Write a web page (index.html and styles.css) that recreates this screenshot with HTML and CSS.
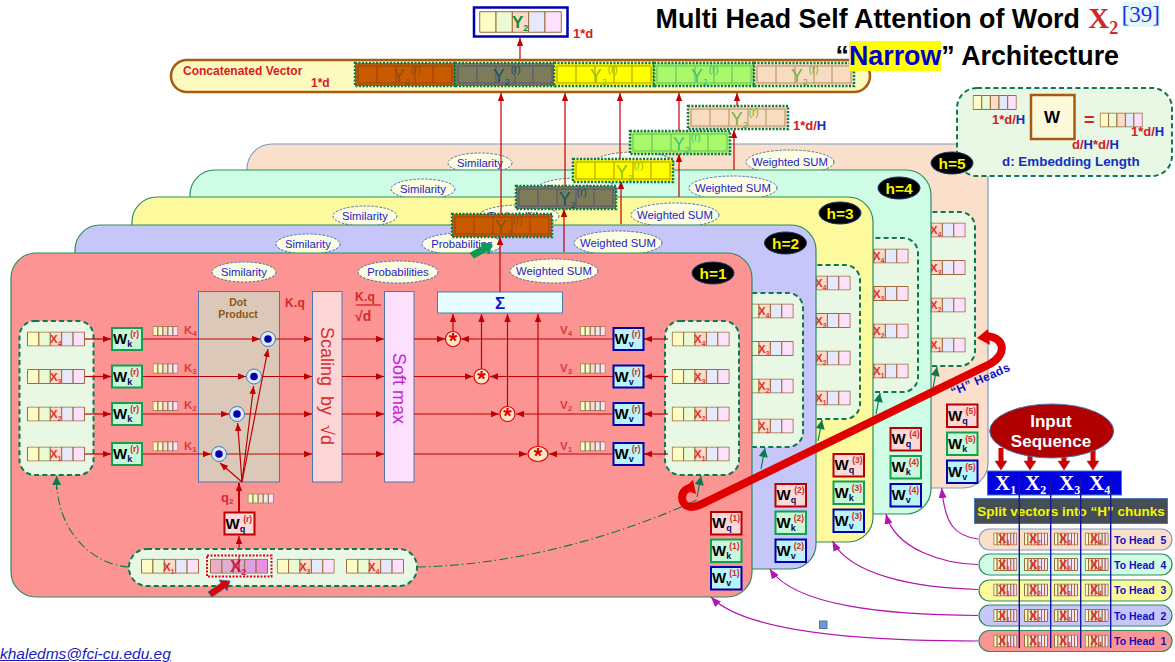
FILE: index.html
```html
<!DOCTYPE html>
<html lang="en">
<head>
<meta charset="utf-8">
<title>Multi Head Self Attention</title>
<link rel="stylesheet" href="styles.css">
</head>
<body>
<main class="slide">
<svg class="diagram" width="1175" height="662" viewBox="0 0 1175 662">
<defs>
  <marker id="ar" viewBox="0 0 10 8" refX="10" refY="4" markerUnits="userSpaceOnUse" markerWidth="8" markerHeight="7" orient="auto"><path class="m-red" d="M0 0L10 4L0 8z"/></marker>
  <marker id="ag" viewBox="0 0 10 10" refX="10" refY="5" markerUnits="userSpaceOnUse" markerWidth="11" markerHeight="9" orient="auto"><path class="m-green" d="M0 0L10 5L0 10z"/></marker>
  <marker id="ap" viewBox="0 0 10 8" refX="10" refY="4" markerUnits="userSpaceOnUse" markerWidth="10" markerHeight="8" orient="auto"><path class="m-purple" d="M0 0L10 4L0 8z"/></marker>
  <symbol id="vec" viewBox="0 0 58 15" preserveAspectRatio="none">
    <rect class="c c1" x="0.5" y="0.5" width="11.4" height="14"/><rect class="c c2" x="11.9" y="0.5" width="11.4" height="14"/><rect class="c c3" x="23.3" y="0.5" width="11.4" height="14"/><rect class="c c4" x="34.7" y="0.5" width="11.4" height="14"/><rect class="c c5" x="46.1" y="0.5" width="11.4" height="14"/>
  </symbol>
  <symbol id="vecp" viewBox="0 0 58 15" preserveAspectRatio="none">
    <rect class="c p1" x="0.5" y="0.5" width="11.4" height="14"/><rect class="c p2" x="11.9" y="0.5" width="11.4" height="14"/><rect class="c p3" x="23.3" y="0.5" width="11.4" height="14"/><rect class="c p4" x="34.7" y="0.5" width="11.4" height="14"/><rect class="c p5" x="46.1" y="0.5" width="11.4" height="14"/>
  </symbol>
  <symbol id="mini" viewBox="0 0 24 13" preserveAspectRatio="none">
    <rect class="c c1" x="0.5" y="0.5" width="3.4" height="12"/><rect class="c c2" x="3.9" y="0.5" width="3.4" height="12"/><rect class="c c3" x="7.3" y="0.5" width="3.4" height="12"/><rect class="c c3" x="10.7" y="0.5" width="3.4" height="12"/><rect class="c c4" x="14.1" y="0.5" width="3.4" height="12"/><rect class="c c5" x="17.5" y="0.5" width="3" height="12"/><rect class="c c5" x="20.5" y="0.5" width="3" height="12"/>
  </symbol>
  <g id="yvec">
    <rect class="yo" x="0" y="0" width="100" height="23"/>
    <rect class="yi" x="3" y="3" width="94" height="17"/>
    <path class="yd" d="M22 3V20M41 3V20M60 3V20M78 3V20"/>
  </g>
  <g id="valgroup">
    <rect class="grp" x="665" y="321" width="74" height="154" rx="15"/>
    <use href="#vec" x="671.7" y="331.5" width="58" height="15"/><text class="xl" x="694" y="343">X<tspan class="xs" dy="3">4</tspan></text>
    <use href="#vec" x="671.7" y="369" width="58" height="15"/><text class="xl" x="694" y="380.5">X<tspan class="xs" dy="3">3</tspan></text>
    <use href="#vec" x="671.7" y="406.5" width="58" height="15"/><text class="xl" x="694" y="418">X<tspan class="xs" dy="3">2</tspan></text>
    <use href="#vec" x="671.7" y="446.5" width="58" height="15"/><text class="xl" x="694" y="458">X<tspan class="xs" dy="3">1</tspan></text>
    <line class="lg" x1="697" y1="497" x2="701" y2="476" marker-end="url(#ag)"/>
  </g>
</defs>

<!-- head 5 -->
<rect class="panel p-5" x="247" y="144" width="741" height="344" rx="25"/>
<ellipse class="tag" cx="480" cy="163" rx="32" ry="10"/><text class="tagt" x="480" y="167">Similarity</text>
<ellipse class="tag" cx="634" cy="163" rx="40" ry="11"/><text class="tagt" x="634" y="167">Probabilities</text>
<ellipse class="tag" cx="790" cy="162" rx="44" ry="12"/><text class="tagt" x="790" y="166">Weighted SUM</text>
<use href="#valgroup" transform="translate(236 -109)"/>
<!-- head 4 -->
<rect class="panel p-4" x="190" y="170" width="741" height="344" rx="25"/>
<ellipse class="tag" cx="423" cy="189" rx="32" ry="10"/><text class="tagt" x="423" y="193">Similarity</text>
<ellipse class="tag" cx="577" cy="189" rx="40" ry="11"/><text class="tagt" x="577" y="193">Probabilities</text>
<ellipse class="tag" cx="733" cy="188" rx="44" ry="12"/><text class="tagt" x="733" y="192">Weighted SUM</text>
<use href="#valgroup" transform="translate(179 -83)"/>
<!-- head 3 -->
<rect class="panel p-3" x="132" y="197" width="741" height="345" rx="25"/>
<ellipse class="tag" cx="365" cy="216" rx="32" ry="10"/><text class="tagt" x="365" y="220">Similarity</text>
<ellipse class="tag" cx="519" cy="216" rx="40" ry="11"/><text class="tagt" x="519" y="220">Probabilities</text>
<ellipse class="tag" cx="675" cy="215" rx="44" ry="12"/><text class="tagt" x="675" y="219">Weighted SUM</text>
<use href="#valgroup" transform="translate(121 -56)"/>
<!-- head 2 -->
<rect class="panel p-2" x="75" y="225" width="741" height="344" rx="25"/>
<ellipse class="tag" cx="308" cy="244" rx="32" ry="10"/><text class="tagt" x="308" y="248">Similarity</text>
<ellipse class="tag" cx="462" cy="244" rx="40" ry="11"/><text class="tagt" x="462" y="248">Probabilities</text>
<ellipse class="tag" cx="618" cy="243" rx="44" ry="12"/><text class="tagt" x="618" y="247">Weighted SUM</text>
<use href="#valgroup" transform="translate(64 -28)"/>
<!-- head 1 -->
<rect class="panel p-1" x="11" y="253" width="741" height="344" rx="25"/>
<ellipse class="tag" cx="244" cy="272" rx="32" ry="10"/><text class="tagt" x="244" y="276">Similarity</text>
<ellipse class="tag" cx="398" cy="272" rx="40" ry="11"/><text class="tagt" x="398" y="276">Probabilities</text>
<ellipse class="tag" cx="554" cy="271" rx="44" ry="12"/><text class="tagt" x="554" y="275">Weighted SUM</text>

<!-- left key group -->
<rect class="grp" x="19.5" y="321" width="74" height="154" rx="15"/>
<use href="#vec" x="27" y="331.5" width="58" height="15"/><text class="xl" x="50" y="343">X<tspan class="xs" dy="3">4</tspan></text>
<use href="#vec" x="27" y="369" width="58" height="15"/><text class="xl" x="50" y="380.5">X<tspan class="xs" dy="3">3</tspan></text>
<use href="#vec" x="27" y="406.5" width="58" height="15"/><text class="xl" x="50" y="418">X<tspan class="xs" dy="3">2</tspan></text>
<use href="#vec" x="27" y="446.5" width="58" height="15"/><text class="xl" x="50" y="458">X<tspan class="xs" dy="3">1</tspan></text>
<use href="#valgroup"/>

<!-- blocks -->
<rect class="box dot" x="198.5" y="291.5" width="81" height="190.5"/>
<text class="dott" x="238" y="306">Dot</text><text class="dott" x="238" y="318">Product</text>
<text class="kq" x="285" y="307">K.q</text>
<rect class="box scale" x="312.5" y="291.5" width="29.5" height="190.5"/>
<text class="vert vs" transform="translate(321 327) rotate(90)">Scaling  by  √d</text>
<rect class="box soft" x="384.5" y="291.5" width="29.5" height="190.5"/>
<text class="vert vm" transform="translate(393 353) rotate(90)">Soft max</text>
<text class="kq" x="355" y="301">K.q</text><line class="frac" x1="356" y1="305" x2="381" y2="305"/><text class="kq2" x="355" y="321">√d</text>
<rect class="box sum" x="437.5" y="292" width="125" height="21"/>
<text class="sigma" x="500" y="309">Σ</text>

<!-- row arrows -->
<g class="lr">
  <line x1="85" y1="339" x2="111" y2="339" marker-end="url(#ar)"/><line x1="85" y1="376.5" x2="111" y2="376.5" marker-end="url(#ar)"/><line x1="85" y1="414" x2="111" y2="414" marker-end="url(#ar)"/><line x1="85" y1="454" x2="111" y2="454" marker-end="url(#ar)"/>
  <line x1="142" y1="339" x2="260" y2="339" marker-end="url(#ar)"/><line x1="142" y1="376.5" x2="246" y2="376.5" marker-end="url(#ar)"/><line x1="142" y1="414" x2="229" y2="414" marker-end="url(#ar)"/><line x1="142" y1="454" x2="211" y2="454" marker-end="url(#ar)"/>
  <line x1="276" y1="339" x2="312" y2="339" marker-end="url(#ar)"/><line x1="262" y1="376.5" x2="312" y2="376.5" marker-end="url(#ar)"/><line x1="245" y1="414" x2="312" y2="414" marker-end="url(#ar)"/><line x1="227" y1="454" x2="312" y2="454" marker-end="url(#ar)"/>
  <line x1="342" y1="339" x2="384" y2="339" marker-end="url(#ar)"/><line x1="342" y1="376.5" x2="384" y2="376.5" marker-end="url(#ar)"/><line x1="342" y1="414" x2="384" y2="414" marker-end="url(#ar)"/><line x1="342" y1="454" x2="384" y2="454" marker-end="url(#ar)"/>
  <line x1="414" y1="339" x2="445" y2="339" marker-end="url(#ar)"/><line x1="414" y1="376.5" x2="473" y2="376.5" marker-end="url(#ar)"/><line x1="414" y1="414" x2="499" y2="414" marker-end="url(#ar)"/><line x1="414" y1="454" x2="527" y2="454" marker-end="url(#ar)"/>
  <line x1="613" y1="339" x2="461" y2="339" marker-end="url(#ar)"/><line x1="613" y1="376.5" x2="490" y2="376.5" marker-end="url(#ar)"/><line x1="613" y1="414" x2="516" y2="414" marker-end="url(#ar)"/><line x1="613" y1="454" x2="549" y2="454" marker-end="url(#ar)"/>
  <line x1="668" y1="339" x2="644" y2="339" marker-end="url(#ar)"/><line x1="668" y1="376.5" x2="644" y2="376.5" marker-end="url(#ar)"/><line x1="668" y1="414" x2="644" y2="414" marker-end="url(#ar)"/><line x1="668" y1="454" x2="644" y2="454" marker-end="url(#ar)"/>
  <line x1="453" y1="331" x2="453" y2="314" marker-end="url(#ar)"/><line x1="481.5" y1="369" x2="481.5" y2="314" marker-end="url(#ar)"/><line x1="507.5" y1="406" x2="507.5" y2="314" marker-end="url(#ar)"/><line x1="538" y1="446" x2="538" y2="314" marker-end="url(#ar)"/>
  <line x1="242" y1="482" x2="220" y2="463" marker-end="url(#ar)"/><line x1="242" y1="482" x2="237.6" y2="423" marker-end="url(#ar)"/><line x1="242" y1="482" x2="253.6" y2="386" marker-end="url(#ar)"/><line x1="242" y1="482" x2="268" y2="349" marker-end="url(#ar)"/>
  <line class="thick" x1="239" y1="512" x2="239" y2="483" marker-end="url(#ar)"/>
  <line x1="239" y1="556" x2="239" y2="536" marker-end="url(#ar)"/>
</g>
<g class="dotm"><circle cx="268" cy="339" r="7.5"/><circle cx="254" cy="376.5" r="7.5"/><circle cx="237" cy="414" r="7.5"/><circle cx="219" cy="454" r="7.5"/></g>
<g class="doti"><circle cx="268" cy="339" r="3.8"/><circle cx="254" cy="376.5" r="3.8"/><circle cx="237" cy="414" r="3.8"/><circle cx="219" cy="454" r="3.8"/></g>
<g class="star"><circle cx="453" cy="339" r="7.5"/><circle cx="481.5" cy="376.5" r="7.5"/><circle cx="507.5" cy="414" r="7.5"/><ellipse cx="538" cy="454" rx="10" ry="7.5"/></g>
<text class="start" x="453" y="348">*</text><text class="start" x="481.5" y="385.5">*</text><text class="start" x="507.5" y="423">*</text><text class="start" x="538" y="463">*</text>

<!-- small key and value vectors -->
<use href="#vec" x="152.7" y="326" width="25.5" height="10"/><use href="#vec" x="152.7" y="363.5" width="25.5" height="10"/><use href="#vec" x="152.7" y="401" width="25.5" height="10"/><use href="#vec" x="152.7" y="441.3" width="25.5" height="10"/>
<use href="#vec" x="580" y="326" width="25.5" height="10"/><use href="#vec" x="580" y="363.5" width="25.5" height="10"/><use href="#vec" x="580" y="401" width="25.5" height="10"/><use href="#vec" x="580" y="441.3" width="25.5" height="10"/>
<text class="kv" x="184" y="334">K<tspan class="kvs" dy="2">4</tspan></text><text class="kv" x="184" y="372">K<tspan class="kvs" dy="2">3</tspan></text><text class="kv" x="184" y="409">K<tspan class="kvs" dy="2">2</tspan></text><text class="kv" x="184" y="450">K<tspan class="kvs" dy="2">1</tspan></text>
<text class="kv" x="560" y="334">V<tspan class="kvs" dy="2">4</tspan></text><text class="kv" x="560" y="372">V<tspan class="kvs" dy="2">3</tspan></text><text class="kv" x="560" y="409">V<tspan class="kvs" dy="2">2</tspan></text><text class="kv" x="560" y="450">V<tspan class="kvs" dy="2">1</tspan></text>

<!-- W boxes head 1 -->
<g class="w k" transform="translate(112 328)"><rect width="30" height="22"/><text x="1" y="16">W<tspan class="sb" dy="3">k</tspan><tspan class="sp" dx="-2" dy="-10">(r)</tspan></text></g>
<g class="w k" transform="translate(112 365.5)"><rect width="30" height="22"/><text x="1" y="16">W<tspan class="sb" dy="3">k</tspan><tspan class="sp" dx="-2" dy="-10">(r)</tspan></text></g>
<g class="w k" transform="translate(112 403)"><rect width="30" height="22"/><text x="1" y="16">W<tspan class="sb" dy="3">k</tspan><tspan class="sp" dx="-2" dy="-10">(r)</tspan></text></g>
<g class="w k" transform="translate(112 443)"><rect width="30" height="22"/><text x="1" y="16">W<tspan class="sb" dy="3">k</tspan><tspan class="sp" dx="-2" dy="-10">(r)</tspan></text></g>
<g class="w v" transform="translate(613.5 328)"><rect width="30" height="22"/><text x="1" y="16">W<tspan class="sb" dy="3">v</tspan><tspan class="sp" dx="-2" dy="-10">(r)</tspan></text></g>
<g class="w v" transform="translate(613.5 365.5)"><rect width="30" height="22"/><text x="1" y="16">W<tspan class="sb" dy="3">v</tspan><tspan class="sp" dx="-2" dy="-10">(r)</tspan></text></g>
<g class="w v" transform="translate(613.5 403)"><rect width="30" height="22"/><text x="1" y="16">W<tspan class="sb" dy="3">v</tspan><tspan class="sp" dx="-2" dy="-10">(r)</tspan></text></g>
<g class="w v" transform="translate(613.5 443)"><rect width="30" height="22"/><text x="1" y="16">W<tspan class="sb" dy="3">v</tspan><tspan class="sp" dx="-2" dy="-10">(r)</tspan></text></g>
<g class="w q" transform="translate(224.5 512.5)"><rect width="30" height="22"/><text x="1" y="16">W<tspan class="sb" dy="3">q</tspan><tspan class="sp" dx="-2" dy="-10">(r)</tspan></text></g>
<text class="q2" x="221" y="502">q<tspan class="q2s" dy="2">2</tspan></text>
<use href="#vec" x="247.7" y="493.5" width="26" height="10"/>

<!-- bottom input group -->
<path class="dd" d="M129 567C95 565 60 535 57 487"/>
<path class="dd" d="M417 567C520 565 620 535 697 500"/>
<line class="lg" x1="56.6" y1="490" x2="56.6" y2="476" marker-end="url(#ag)"/>
<rect class="grp" x="129" y="549" width="288" height="37" rx="18"/>
<use href="#vec" x="141" y="558.7" width="58" height="15"/><text class="xl" x="163" y="571">X<tspan class="xs" dy="3">1</tspan></text>
<use href="#vecp" x="210" y="558.7" width="58" height="15"/><rect class="sel" x="207" y="555.5" width="64.5" height="21"/><text class="xb" x="230" y="572">X<tspan class="xbs" dy="3">2</tspan></text>
<use href="#vec" x="276.7" y="558.7" width="58" height="15"/><text class="xl" x="299" y="571">X<tspan class="xs" dy="3">3</tspan></text>
<use href="#vec" x="346" y="558.7" width="58" height="15"/><text class="xl" x="368" y="571">X<tspan class="xs" dy="3">4</tspan></text>
<line class="lr1" x1="239" y1="556" x2="239" y2="572"/>
<path class="ptr" d="M208 592L221 583L219 580L230 581L227 591L225 588L212 597z"/>
<path class="ptrg" d="M470 253L483 246L481 243L492 244L489 254L487 251L474 258z"/>

<!-- W boxes other heads -->
<g class="w q" transform="translate(711 512)"><rect width="30.5" height="22.5"/><text x="1" y="16">W<tspan class="sb" dy="3">q</tspan><tspan class="sp" dx="-2" dy="-10">(1)</tspan></text></g>
<g class="w k" transform="translate(711 539.5)"><rect width="30.5" height="22.5"/><text x="1" y="16">W<tspan class="sb" dy="3">k</tspan><tspan class="sp" dx="-2" dy="-10">(1)</tspan></text></g>
<g class="w v" transform="translate(711 567)"><rect width="30.5" height="22.5"/><text x="1" y="16">W<tspan class="sb" dy="3">v</tspan><tspan class="sp" dx="-2" dy="-10">(1)</tspan></text></g>
<g class="w q" transform="translate(775.5 484)"><rect width="30.5" height="22.5"/><text x="1" y="16">W<tspan class="sb" dy="3">q</tspan><tspan class="sp" dx="-2" dy="-10">(2)</tspan></text></g>
<g class="w k" transform="translate(775.5 511.5)"><rect width="30.5" height="22.5"/><text x="1" y="16">W<tspan class="sb" dy="3">k</tspan><tspan class="sp" dx="-2" dy="-10">(2)</tspan></text></g>
<g class="w v" transform="translate(775.5 539.5)"><rect width="30.5" height="22.5"/><text x="1" y="16">W<tspan class="sb" dy="3">v</tspan><tspan class="sp" dx="-2" dy="-10">(2)</tspan></text></g>
<g class="w q" transform="translate(833.5 454)"><rect width="30.5" height="22.5"/><text x="1" y="16">W<tspan class="sb" dy="3">q</tspan><tspan class="sp" dx="-2" dy="-10">(3)</tspan></text></g>
<g class="w k" transform="translate(833.5 481.5)"><rect width="30.5" height="22.5"/><text x="1" y="16">W<tspan class="sb" dy="3">k</tspan><tspan class="sp" dx="-2" dy="-10">(3)</tspan></text></g>
<g class="w v" transform="translate(833.5 509.5)"><rect width="30.5" height="22.5"/><text x="1" y="16">W<tspan class="sb" dy="3">v</tspan><tspan class="sp" dx="-2" dy="-10">(3)</tspan></text></g>
<g class="w q" transform="translate(890.5 428)"><rect width="30.5" height="22.5"/><text x="1" y="16">W<tspan class="sb" dy="3">q</tspan><tspan class="sp" dx="-2" dy="-10">(4)</tspan></text></g>
<g class="w k" transform="translate(890.5 456)"><rect width="30.5" height="22.5"/><text x="1" y="16">W<tspan class="sb" dy="3">k</tspan><tspan class="sp" dx="-2" dy="-10">(4)</tspan></text></g>
<g class="w v" transform="translate(890.5 484)"><rect width="30.5" height="22.5"/><text x="1" y="16">W<tspan class="sb" dy="3">v</tspan><tspan class="sp" dx="-2" dy="-10">(4)</tspan></text></g>
<g class="w q" transform="translate(947 404.5)"><rect width="30.5" height="22.5"/><text x="1" y="16">W<tspan class="sb" dy="3">q</tspan><tspan class="sp" dx="-2" dy="-10">(5)</tspan></text></g>
<g class="w k" transform="translate(947 432.5)"><rect width="30.5" height="22.5"/><text x="1" y="16">W<tspan class="sb" dy="3">k</tspan><tspan class="sp" dx="-2" dy="-10">(5)</tspan></text></g>
<g class="w v" transform="translate(947 460.5)"><rect width="30.5" height="22.5"/><text x="1" y="16">W<tspan class="sb" dy="3">v</tspan><tspan class="sp" dx="-2" dy="-10">(5)</tspan></text></g>

<!-- key box -->
<rect class="grp key" x="957" y="88" width="215" height="88" rx="20"/>
<use href="#vec" x="972.7" y="95" width="44" height="15"/>
<text class="sz" x="992" y="124">1*d/<tspan class="szb">H</tspan></text>
<rect class="wbig" x="1031" y="95" width="43.5" height="44"/><text class="wbigt" x="1052" y="123">W</text>
<text class="eq" x="1084" y="126">=</text>
<use href="#vec" x="1099.7" y="112.5" width="43" height="15"/>
<text class="sz" x="1131" y="136">1*d/<tspan class="szb">H</tspan></text>
<text class="sz" x="1072" y="149">d/<tspan class="szb">H</tspan>*d/<tspan class="szb">H</tspan></text>
<text class="emb" x="1002" y="166">d: Embedding Length</text>

<!-- badges -->
<ellipse class="badge" cx="952" cy="163" rx="21" ry="11"/><text class="badget" x="952" y="169">h=5</text>
<ellipse class="badge" cx="899" cy="188" rx="21" ry="11"/><text class="badget" x="899" y="194">h=4</text>
<ellipse class="badge" cx="840" cy="213" rx="21" ry="11"/><text class="badget" x="840" y="219">h=3</text>
<ellipse class="badge" cx="785.5" cy="243" rx="21" ry="11"/><text class="badget" x="785.5" y="249">h=2</text>
<ellipse class="badge" cx="713" cy="273" rx="21" ry="11"/><text class="badget" x="713" y="279">h=1</text>

<!-- red loop arrow -->
<path class="loop" d="M692 488C679 488 679 506 691 507C696 507 700 505 708 501L990 364C1008 354 1005 336 984 336"/>
<path class="loopa" d="M693 480L696 494L683 489z"/>
<path class="loopa" d="M977 338L988 329L990 345z"/>
<text class="hh" transform="translate(953 396) rotate(-24)">“H” Heads</text>

<!-- Y outputs -->
<g class="lr">
  <line x1="501" y1="214" x2="501" y2="93" marker-end="url(#ar)"/>
  <line x1="565" y1="186" x2="565" y2="93" marker-end="url(#ar)"/>
  <line x1="620" y1="159" x2="620" y2="93" marker-end="url(#ar)"/>
  <line x1="679" y1="132" x2="679" y2="93" marker-end="url(#ar)"/>
  <line x1="737" y1="107" x2="737" y2="93" marker-end="url(#ar)"/>
  <line x1="500" y1="292" x2="500" y2="237" marker-end="url(#ar)"/>
  <line x1="564" y1="252" x2="564" y2="209" marker-end="url(#ar)"/>
  <line x1="621" y1="224" x2="621" y2="181" marker-end="url(#ar)"/>
  <line x1="679" y1="197" x2="679" y2="154" marker-end="url(#ar)"/>
  <line x1="734" y1="170" x2="734" y2="130" marker-end="url(#ar)"/>
  <line x1="520" y1="59" x2="520" y2="38" marker-end="url(#ar)"/>
</g>
<use class="y y1" href="#yvec" x="452" y="214"/><text class="yl yc1" x="495" y="233">Y<tspan class="ys" dy="3">2</tspan><tspan class="yr" dx="1" dy="-12">(r)</tspan></text>
<use class="y y2" href="#yvec" x="516" y="186"/><text class="yl yc2" x="559" y="205">Y<tspan class="ys" dy="3">2</tspan><tspan class="yr" dx="1" dy="-12">(r)</tspan></text>
<use class="y y3" href="#yvec" x="573" y="159"/><text class="yl yc3" x="616" y="178">Y<tspan class="ys" dy="3">2</tspan><tspan class="yr" dx="1" dy="-12">(r)</tspan></text>
<use class="y y4" href="#yvec" x="630" y="131"/><text class="yl yc4" x="673" y="150">Y<tspan class="ys" dy="3">2</tspan><tspan class="yr" dx="1" dy="-12">(r)</tspan></text>
<use class="y y5" href="#yvec" x="688" y="106"/><text class="yl yc5" x="731" y="125">Y<tspan class="ys" dy="3">2</tspan><tspan class="yr" dx="1" dy="-12">(r)</tspan></text>
<text class="sz" x="793" y="130">1*d/<tspan class="szb">H</tspan></text>

<!-- concatenated -->
<rect class="concat" x="171" y="60" width="699" height="32" rx="16"/>
<text class="cont" x="183" y="75">Concatenated Vector</text><text class="cont" x="311" y="87">1*d</text>
<use class="y y1" href="#yvec" x="355" y="63"/><text class="yl yc1" x="393" y="82">Y<tspan class="ys" dy="3">2</tspan><tspan class="yr" dx="1" dy="-12">(r)</tspan></text>
<use class="y y2" href="#yvec" x="455" y="63"/><text class="yl yc2" x="493" y="82">Y<tspan class="ys" dy="3">2</tspan><tspan class="yr" dx="1" dy="-12">(r)</tspan></text>
<use class="y y3" href="#yvec" x="554" y="63"/><text class="yl yc3" x="590" y="82">Y<tspan class="ys" dy="3">2</tspan><tspan class="yr" dx="1" dy="-12">(r)</tspan></text>
<use class="y y4" href="#yvec" x="654" y="63"/><text class="yl yc4" x="691" y="82">Y<tspan class="ys" dy="3">2</tspan><tspan class="yr" dx="1" dy="-12">(r)</tspan></text>
<use class="y y5" href="#yvec" x="754" y="63"/><text class="yl yc5" x="791" y="82">Y<tspan class="ys" dy="3">2</tspan><tspan class="yr" dx="1" dy="-12">(r)</tspan></text>

<!-- final output -->
<rect class="out" x="474" y="7.5" width="93.5" height="29"/>
<use href="#vec" x="479" y="11" width="83" height="22"/>
<text class="yfin" x="512" y="28">Y<tspan class="yfs" dy="3">2</tspan></text>
<text class="sz" x="573" y="38">1*d</text>

<!-- input sequence -->
<g class="fat">
  <line x1="1001" y1="448" x2="1001" y2="462"/><line x1="1030" y1="452" x2="1030" y2="462"/><line x1="1064" y1="452" x2="1064" y2="462"/><line x1="1093" y1="448" x2="1093" y2="462"/>
</g>
<path class="fath" d="M995 461H1007L1001 470zM1024 461H1036L1030 470zM1058 461H1070L1064 470zM1087 461H1099L1093 470z"/>
<ellipse class="inseq" cx="1051.7" cy="431" rx="62" ry="27"/>
<text class="inseqt" x="1051" y="427">Input</text><text class="inseqt" x="1051" y="447">Sequence</text>
<rect class="xbar" x="987.5" y="471" width="134" height="24"/>
<text class="xw" x="995" y="490">X<tspan class="xws" dy="4">1</tspan></text><text class="xw" x="1025" y="490">X<tspan class="xws" dy="4">2</tspan></text><text class="xw" x="1059" y="490">X<tspan class="xws" dy="4">3</tspan></text><text class="xw" x="1089" y="490">X<tspan class="xws" dy="4">4</tspan></text>
<rect class="split" x="974.5" y="498.5" width="193" height="25"/>
<text class="splitt" x="1071" y="516">Split vectors into “H” chunks</text>

<!-- head rows -->
<rect class="pill p-5" x="979" y="529" width="193" height="21" rx="10.5"/>
<rect class="pill pg p-4" x="979" y="554" width="193" height="21" rx="10.5"/>
<rect class="pill pg p-3" x="979" y="580" width="193" height="21" rx="10.5"/>
<rect class="pill pg p-2" x="979" y="605" width="193" height="21" rx="10.5"/>
<rect class="pill pg p-1" x="979" y="630.5" width="193" height="21" rx="10.5"/>

<use href="#mini" x="993.3" y="532.5" width="24" height="13"/><use href="#mini" x="1024" y="532.5" width="24" height="13"/><use href="#mini" x="1054" y="532.5" width="24" height="13"/><use href="#mini" x="1084.7" y="532.5" width="24" height="13"/>
<text class="xm" x="998" y="543">X<tspan class="xs" dy="2">1</tspan></text><text class="xm" x="1029" y="543">X<tspan class="xs" dy="2">2</tspan></text><text class="xm" x="1059" y="543">X<tspan class="xs" dy="2">3</tspan></text><text class="xm" x="1090" y="543">X<tspan class="xs" dy="2">4</tspan></text>
<text class="th" x="1114" y="544">To Head  5</text>
<use href="#mini" x="993.3" y="558" width="24" height="13"/><use href="#mini" x="1024" y="558" width="24" height="13"/><use href="#mini" x="1054" y="558" width="24" height="13"/><use href="#mini" x="1084.7" y="558" width="24" height="13"/>
<text class="xm" x="998" y="568.5">X<tspan class="xs" dy="2">1</tspan></text><text class="xm" x="1029" y="568.5">X<tspan class="xs" dy="2">2</tspan></text><text class="xm" x="1059" y="568.5">X<tspan class="xs" dy="2">3</tspan></text><text class="xm" x="1090" y="568.5">X<tspan class="xs" dy="2">4</tspan></text>
<text class="th" x="1114" y="569">To Head  4</text>
<use href="#mini" x="993.3" y="583.5" width="24" height="13"/><use href="#mini" x="1024" y="583.5" width="24" height="13"/><use href="#mini" x="1054" y="583.5" width="24" height="13"/><use href="#mini" x="1084.7" y="583.5" width="24" height="13"/>
<text class="xm" x="998" y="594">X<tspan class="xs" dy="2">1</tspan></text><text class="xm" x="1029" y="594">X<tspan class="xs" dy="2">2</tspan></text><text class="xm" x="1059" y="594">X<tspan class="xs" dy="2">3</tspan></text><text class="xm" x="1090" y="594">X<tspan class="xs" dy="2">4</tspan></text>
<text class="th" x="1114" y="594">To Head  3</text>
<use href="#mini" x="993.3" y="609" width="24" height="13"/><use href="#mini" x="1024" y="609" width="24" height="13"/><use href="#mini" x="1054" y="609" width="24" height="13"/><use href="#mini" x="1084.7" y="609" width="24" height="13"/>
<text class="xm" x="998" y="619.5">X<tspan class="xs" dy="2">1</tspan></text><text class="xm" x="1029" y="619.5">X<tspan class="xs" dy="2">2</tspan></text><text class="xm" x="1059" y="619.5">X<tspan class="xs" dy="2">3</tspan></text><text class="xm" x="1090" y="619.5">X<tspan class="xs" dy="2">4</tspan></text>
<text class="th" x="1114" y="620">To Head  2</text>
<use href="#mini" x="993.3" y="634.5" width="24" height="13"/><use href="#mini" x="1024" y="634.5" width="24" height="13"/><use href="#mini" x="1054" y="634.5" width="24" height="13"/><use href="#mini" x="1084.7" y="634.5" width="24" height="13"/>
<text class="xm" x="998" y="645">X<tspan class="xs" dy="2">1</tspan></text><text class="xm" x="1029" y="645">X<tspan class="xs" dy="2">2</tspan></text><text class="xm" x="1059" y="645">X<tspan class="xs" dy="2">3</tspan></text><text class="xm" x="1090" y="645">X<tspan class="xs" dy="2">4</tspan></text>
<text class="th" x="1114" y="645">To Head  1</text>

<g class="chunk"><line x1="1019.3" y1="475" x2="1019.3" y2="648"/><line x1="1050.7" y1="478" x2="1050.7" y2="648"/><line x1="1080.7" y1="478" x2="1080.7" y2="648"/><line x1="1110.7" y1="478" x2="1110.7" y2="648"/></g>

<!-- purple feeds -->
<g class="feed">
  <path d="M978 641C860 641 745 632 711 597" marker-end="url(#ap)"/>
  <path d="M978 615.5C885 615 795 606 769.7 569" marker-end="url(#ap)"/>
  <path d="M978 589.5C915 588 850 575 832.5 541" marker-end="url(#ap)"/>
  <path d="M978 564.5C945 564 895 550 886 514" marker-end="url(#ap)"/>
  <path d="M978 539C955 536 945 525 941.7 488" marker-end="url(#ap)"/>
</g>
<rect class="sq" x="819.5" y="621" width="7.5" height="7.5"/>
</svg>

<header class="title">
  <h1 class="line1">Multi Head Self Attention of Word <span class="xt">X<sub>2</sub></span> <span class="cite">[39]</span></h1>
  <h2 class="line2">“<mark class="hl">Narrow</mark>” Architecture</h2>
</header>
<footer class="foot"><a class="mail" href="mailto:khaledms@fci-cu.edu.eg">khaledms@fci-cu.edu.eg</a></footer>
</main>
</body>
</html>
```
FILE: styles.css
```css
* { box-sizing: border-box; }
html, body { margin: 0; padding: 0; background: #fff; }
body { font-family: "Liberation Sans", Arial, sans-serif; }
.slide { position: relative; width: 1175px; height: 662px; overflow: hidden; display: flex; flex-direction: column; }
.diagram { position: absolute; left: 0; top: 0; }
.diagram text { font-family: "Liberation Sans", Arial, sans-serif; white-space: pre; }

/* title */
.title { position: relative; display: flex; flex-direction: column; align-items: flex-end; padding-top: 2px; }
.line1, .line2 { margin: 0; font-weight: 700; font-size: 26.8px; color: #000; white-space: pre; }
.line1 { line-height: 32px; padding-right: 15px; }
.line2 { line-height: 32px; padding-right: 56px; margin-top: 5px; }
.xt { font-family: "Liberation Serif", serif; font-weight: 700; color: #cc2a2a; font-size: 29px; margin-left: 1px; }
.xt sub { font-size: 18px; line-height: 0; vertical-align: -6px; }
.cite { font-family: "Liberation Serif", serif; font-weight: 400; color: #2030e0; background: #e4f8fc; font-size: 23px; vertical-align: 6px; line-height: 1; margin-left: -4px; }
.hl { background: #ffff00; color: #0000c8; padding: 0; }
.foot { margin-top: auto; position: relative; }
.mail { font-size: 15.5px; font-style: italic; color: #1a1ac0; line-height: 17px; display: block; }

/* panels */
.panel { stroke-width: 1.2; stroke: #2e8b5f; }
.p-1 { fill: #fc9494; }
.p-2 { fill: #c6c6f8; }
.p-3 { fill: #fcfa9c; }
.p-4 { fill: #cefce4; }
.p-5 { fill: #fae0cb; stroke: #7e9cc4; }
.tag { fill: #fdfde2; stroke: #4a6fa8; stroke-width: 1; stroke-dasharray: 2.5 1.5; }
.tagt { font-size: 11.3px; fill: #2222cc; text-anchor: middle; }
.badge { fill: #000; stroke: #1c3a6a; stroke-width: 1; }
.badget { font-size: 15.5px; font-weight: 700; fill: #f4f400; text-anchor: middle; }
.grp { fill: #e8f8e4; stroke: #0c7a4c; stroke-width: 2; stroke-dasharray: 5 3.2; }
.c { stroke: #9c6c3c; stroke-width: 1; vector-effect: non-scaling-stroke; }
.c1 { fill: #fdfcc4; } .c2 { fill: #eafad4; } .c3 { fill: #fbdcc8; } .c4 { fill: #e6e8fb; } .c5 { fill: #fde0fb; }
.p1 { fill: #e8aec8; } .p2 { fill: #e0aed0; } .p3 { fill: #e0a8d0; } .p4 { fill: #dea0e0; } .p5 { fill: #e890e4; }
.xl { font-size: 11.5px; font-weight: 700; fill: #e03030; }
.xs { font-size: 6.5px; }
.xm { font-size: 12.5px; font-weight: 700; fill: #e03030; }
.xb { font-size: 17px; font-weight: 700; fill: #cc1e5c; }
.xbs { font-size: 9px; }
.sel { fill: none; stroke: #e00020; stroke-width: 2; stroke-dasharray: 2 1.5; }

/* blocks */
.box { stroke: #4a78b0; stroke-width: 1; }
.dot { fill: #dcc8b8; }
.scale { fill: #fcd6d6; }
.soft { fill: #fde0fe; }
.sum { fill: #e8fdfd; }
.dott { font-size: 10.5px; font-weight: 700; fill: #8a5a14; text-anchor: middle; }
.kq { font-size: 12px; font-weight: 700; fill: #d42a2a; letter-spacing: .3px; }
.kq2 { font-size: 14px; font-weight: 700; fill: #d42a2a; }
.frac { stroke: #d42a2a; stroke-width: 1.4; }
.vert { font-size: 18px; }
.vs { fill: #d62c2c; }
.vm { fill: #c424d0; }
.sigma { font-size: 17px; font-weight: 700; fill: #1010d8; text-anchor: middle; }
.kv { font-size: 11.5px; font-weight: 700; fill: #d83c3c; }
.kvs { font-size: 8px; }
.q2 { font-size: 13px; font-weight: 700; fill: #d42a2a; }
.q2s { font-size: 8px; }

/* arrows */
.lr line { stroke: #c00000; stroke-width: 1.2; }
.lr .thick { stroke-width: 2; }
.lr1 { stroke: #c00000; stroke-width: 1; }
.lg { stroke: #0c7a4c; stroke-width: 1.2; }
.dd { fill: none; stroke: #0c7a4c; stroke-width: 1.1; stroke-dasharray: 9 3 1.5 3; }
.m-red { fill: #c00000; } .m-green { fill: #0c7a4c; } .m-purple { fill: #b414b4; }
.dotm circle { fill: #dce9fa; stroke: #4a78b0; stroke-width: 1; }
.doti circle { fill: #0000a8; stroke: none; }
.star circle, .star ellipse { fill: #fde6c8; stroke: #e00000; stroke-width: 1.2; }
.start { font-size: 22px; font-weight: 700; fill: #e00000; text-anchor: middle; }
.ptr { fill: #e00000; stroke: #3a6ab0; stroke-width: .8; }
.ptrg { fill: #0a9a50; stroke: #0a8a70; stroke-width: .8; }

/* weight boxes */
.w text { font-size: 15px; font-weight: 700; fill: #000; }
.w rect { stroke-width: 2; }
.k rect { fill: #c8f8d8; stroke: #10a050; }
.v rect { fill: #b8f4f8; stroke: #0000b0; }
.q rect { fill: #fcd8d8; stroke: #b80000; }
.w .sb { font-size: 9px; fill: #0a0a60; }
.w .sp { font-size: 8.5px; fill: #d82828; }

/* output vectors */
.yo { stroke: #0c7a4c; stroke-width: 2.5; stroke-dasharray: 2 1.5; }
.yi { stroke-width: 1; }
.yd { stroke-width: 1; fill: none; }
.y1 { fill: #c85a00; stroke: #a03c10; }
.y2 { fill: #7c7c58; stroke: #5c4a80; }
.y3 { fill: #ffff00; stroke: #b89000; }
.y4 { fill: #a8f868; stroke: #60b860; }
.y5 { fill: #f8dcc0; stroke: #b88c5c; }
.yl { font-size: 17.5px; font-weight: 400; }
.ys { font-size: 9px; }
.yr { font-size: 10px; }
.yc1 { fill: #8a5014; } .yc2 { fill: #105468; } .yc3 { fill: #8cc020; } .yc4 { fill: #40c080; } .yc5 { fill: #70b040; }
.sz { font-size: 13px; font-weight: 700; fill: #d42020; }
.szb { fill: #1030c0; }
.concat { fill: #fdfac0; stroke: #a85a10; stroke-width: 2.5; }
.cont { font-size: 12px; font-weight: 700; fill: #d42020; }
.out { fill: #fff; stroke: #0000b0; stroke-width: 2.5; }
.yfin { font-size: 17px; font-weight: 700; fill: #109030; }
.yfs { font-size: 9px; }

/* key */
.wbig { fill: #fdfadc; stroke: #a85a10; stroke-width: 2.5; }
.wbigt { font-size: 17px; font-weight: 700; fill: #000; text-anchor: middle; }
.eq { font-size: 18px; font-weight: 700; fill: #d42020; }
.emb { font-size: 13.4px; font-weight: 700; fill: #1030c0; }

/* loop */
.loop { fill: none; stroke: #e00000; stroke-width: 8; }
.loopa { fill: #e00000; }
.hh { font-size: 12px; font-weight: 700; fill: #1010c0; letter-spacing: .4px; }

/* input */
.fat line { stroke: #d00000; stroke-width: 5; }
.fath { fill: #d00000; stroke: #a02020; stroke-width: .5; }
.inseq { fill: #b00000; stroke: #4a78b0; stroke-width: 1; }
.inseqt { font-size: 17px; font-weight: 700; fill: #fff; text-anchor: middle; }
.xbar { fill: #0000e0; stroke: #4a78b0; stroke-width: 1; }
.diagram .xw { font-family: "Liberation Serif", serif; font-size: 21px; font-weight: 700; fill: #fff; }
.xws { font-size: 12px; }
.split { fill: #454e55; stroke: #4a78b0; stroke-width: 1; }
.splitt { font-size: 13.5px; font-weight: 700; fill: #f6f600; text-anchor: middle; }
.pill { stroke-width: 1.2; }
.pg { stroke: #2e8b5f; }
.th { font-size: 10.5px; font-weight: 700; fill: #1010c0; }
.chunk line { stroke: #1414a0; stroke-width: 1.4; }
.feed path { fill: none; stroke: #b414b4; stroke-width: 1.2; }
.sq { fill: #6a9ad0; stroke: #4a78b0; stroke-width: 1; }
```
